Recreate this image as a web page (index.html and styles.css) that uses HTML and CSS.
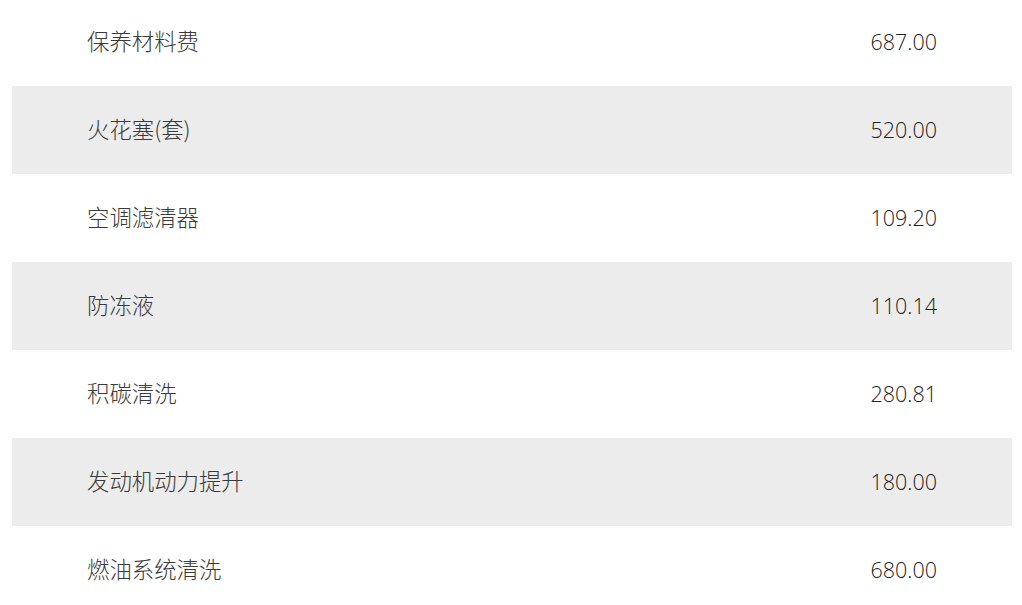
FILE: index.html
```html
<!DOCTYPE html>
<html lang="zh-CN">
<head>
<meta charset="utf-8">
<link rel="stylesheet" href="styles.css">
</head>
<body>
<ul class="list">
  <li class="row"><span class="name">保养材料费</span><span class="price">687.00</span></li>
  <li class="row alt"><span class="name">火花塞(套)</span><span class="price">520.00</span></li>
  <li class="row"><span class="name">空调滤清器</span><span class="price">109.20</span></li>
  <li class="row alt"><span class="name">防冻液</span><span class="price">110.14</span></li>
  <li class="row"><span class="name">积碳清洗</span><span class="price">280.81</span></li>
  <li class="row alt"><span class="name">发动机动力提升</span><span class="price">180.00</span></li>
  <li class="row"><span class="name">燃油系统清洗</span><span class="price">680.00</span></li>
</ul>
</body>
</html>
```
FILE: styles.css
```css
html, body {
  margin: 0;
  background: #fff;
}
body {
  padding: 0 10px 0 12px;
  font-family: "Open Sans", "Noto Sans CJK SC", sans-serif;
  color: #333;
  overflow: hidden;
}
.list {
  list-style: none;
  margin: -2px 0 0;
  padding: 0;
}
.row {
  height: 88px;
  display: flex;
  align-items: center;
  justify-content: space-between;
  padding: 0 75px;
}
.alt {
  background: #ececec;
}
.name {
  font-family: "Noto Sans CJK SC", sans-serif;
  font-weight: 300;
  font-size: 22.4px;
  color: #3a3a3a;
  margin-bottom: 4px;
}
.price {
  font-family: "Open Sans", sans-serif;
  font-weight: 300;
  font-size: 21.5px;
  color: #222;
  margin-bottom: 2px;
}
```
